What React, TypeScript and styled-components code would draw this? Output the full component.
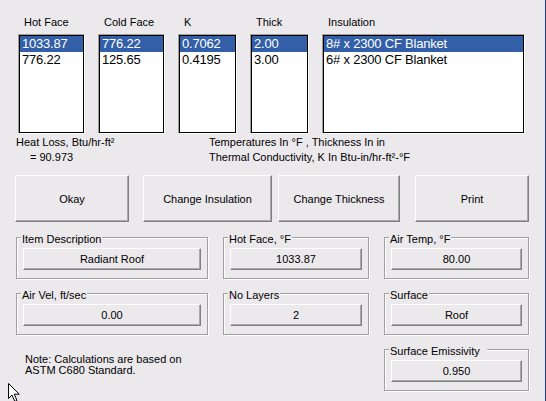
import React from "react";
import styled, { createGlobalStyle } from "styled-components";

const BG = "#ECE9ED";

const GlobalStyle = createGlobalStyle`
  html, body { margin: 0; padding: 0; background: ${BG}; }
  body {
    font-family: "Liberation Sans", Arial, sans-serif;
    font-size: 11px;
    color: #000;
  }
  #root { width: 546px; height: 401px; }
`;

const Window = styled.div`
  position: relative;
  width: 546px;
  height: 401px;
  box-sizing: border-box;
  border-right: 1px solid #26358c;
  background: ${BG};
  overflow: hidden;
  padding-top: 16px;
`;

const ListsRow = styled.div`
  display: flex;
  gap: 13px;
  padding-left: 18px;
`;

const Column = styled.div`
  display: flex;
  flex-direction: column;
`;

const ColLabel = styled.div`
  height: 13px;
  line-height: 13px;
  padding-left: 6px;
  margin-bottom: 5px;
  white-space: nowrap;
`;

const ListBox = styled.div<{ $w: number }>`
  width: ${(p) => p.$w}px;
  height: 100px;
  box-sizing: border-box;
  background: #fff;
  border: 1px solid;
  border-color: #a0a0a0 #fff #fff #a0a0a0;
  box-shadow: inset 0 0 0 1px #000;
  padding: 1px;
  font-size: 13px;
  overflow: hidden;
`;

const ListItem = styled.div<{ $selected?: boolean }>`
  height: 16px;
  line-height: 16px;
  padding-left: 2px;
  white-space: nowrap;
  letter-spacing: -0.2px;
  background: ${(p) => (p.$selected ? "#335FA8" : "transparent")};
  color: ${(p) => (p.$selected ? "#fff" : "#000")};
`;

const InfoRow = styled.div`
  display: grid;
  grid-template-columns: 193px auto;
  padding-left: 16px;
  margin-top: 1px;
  line-height: 15px;
`;

const InfoBlock = styled.div`
  white-space: nowrap;
`;

const Indent = styled.div`
  padding-left: 14px;
`;

const ButtonRow = styled.div`
  display: flex;
  padding-left: 15px;
  margin-top: 10px;
`;

const PushButton = styled.button<{ $w: number; $gap: number }>`
  width: ${(p) => p.$w}px;
  height: 47px;
  margin-right: ${(p) => p.$gap}px;
  box-sizing: border-box;
  padding: 0;
  font-family: inherit;
  font-size: 11px;
  color: #000;
  background: ${BG};
  border: 1px solid;
  border-color: #fff #808080 #808080 #fff;
  box-shadow: inset -1px -1px 0 #a9a9a9;
`;

const GroupsGrid = styled.div`
  display: grid;
  grid-template-columns: 192px 146px 145px;
  grid-auto-rows: 42px;
  column-gap: 15px;
  row-gap: 14px;
  padding-left: 16px;
  margin-top: 15px;
`;

const GroupBox = styled.div<{ $col?: number }>`
  position: relative;
  box-sizing: border-box;
  grid-column: ${(p) => (p.$col ? `${p.$col}` : "auto")};
  border: 1px solid #a0a0a0;
  box-shadow: inset 1px 1px 0 #fff, 1px 1px 0 #fff;
  padding: 10px 6px 0;
`;

const Legend = styled.span`
  position: absolute;
  top: -5px;
  left: 4px;
  padding: 0 1px;
  line-height: 13px;
  background: ${BG};
  white-space: pre;
`;

const ValueButton = styled.button`
  display: block;
  width: 100%;
  height: 22px;
  box-sizing: border-box;
  padding: 0;
  font-family: inherit;
  font-size: 11px;
  color: #000;
  background: ${BG};
  border: 1px solid;
  border-color: #fff #808080 #808080 #fff;
  box-shadow: inset -1px -1px 0 #a9a9a9;
`;

const Note = styled.div`
  grid-column: 1;
  padding: 5px 0 0 9px;
  line-height: 11px;
`;

const Cursor = styled.svg`
  position: absolute;
  left: 8px;
  top: 383px;
`;

const lists = [
  { label: "Hot Face", w: 67, items: ["1033.87", "776.22"] },
  { label: "Cold Face", w: 67, items: ["776.22", "125.65"] },
  { label: "K", w: 59, items: ["0.7062", "0.4195"] },
  { label: "Thick", w: 59, items: ["2.00", "3.00"] },
  { label: "Insulation", w: 203, items: ["8# x 2300 CF Blanket", "6# x 2300 CF Blanket"] },
];

const buttons = [
  { text: "Okay", w: 114, gap: 14 },
  { text: "Change Insulation", w: 129, gap: 6 },
  { text: "Change Thickness", w: 122, gap: 15 },
  { text: "Print", w: 114, gap: 0 },
];

const groups = [
  { label: "Item Description", value: "Radiant Roof" },
  { label: "Hot Face, °F", value: "1033.87" },
  { label: "Air Temp, °F", value: "80.00" },
  { label: "Air Vel, ft/sec", value: "0.00" },
  { label: "No Layers", value: "2" },
  { label: "Surface", value: "Roof" },
];

export default function App() {
  return (
    <>
      <GlobalStyle />
      <Window>
        <ListsRow>
          {lists.map((l) => (
            <Column key={l.label}>
              <ColLabel>{l.label}</ColLabel>
              <ListBox $w={l.w}>
                {l.items.map((it, i) => (
                  <ListItem key={i} $selected={i === 0}>
                    {it}
                  </ListItem>
                ))}
              </ListBox>
            </Column>
          ))}
        </ListsRow>

        <InfoRow>
          <InfoBlock>
            <div>Heat Loss, Btu/hr-ft²</div>
            <Indent>= 90.973</Indent>
          </InfoBlock>
          <InfoBlock>
            <div>Temperatures In °F , Thickness In in</div>
            <div>Thermal Conductivity, K In Btu-in/hr-ft²-°F</div>
          </InfoBlock>
        </InfoRow>

        <ButtonRow>
          {buttons.map((b) => (
            <PushButton key={b.text} $w={b.w} $gap={b.gap}>
              {b.text}
            </PushButton>
          ))}
        </ButtonRow>

        <GroupsGrid>
          {groups.map((g) => (
            <GroupBox key={g.label}>
              <Legend>{g.label}</Legend>
              <ValueButton>{g.value}</ValueButton>
            </GroupBox>
          ))}
          <Note>
            Note: Calculations are based on
            <br />
            ASTM C680 Standard.
          </Note>
          <GroupBox $col={3}>
            <Legend>{"Surface Emissivity  "}</Legend>
            <ValueButton>0.950</ValueButton>
          </GroupBox>
        </GroupsGrid>

        <Cursor width="13" height="20" viewBox="0 0 13 20">
          <path
            d="M0.5 0.5 L0.5 15.5 L4 12 L6.8 18.5 L9 17.5 L6.3 11.2 L11.3 11.2 Z"
            fill="#fff"
            stroke="#000"
            strokeWidth="1"
          />
        </Cursor>
      </Window>
    </>
  );
}
